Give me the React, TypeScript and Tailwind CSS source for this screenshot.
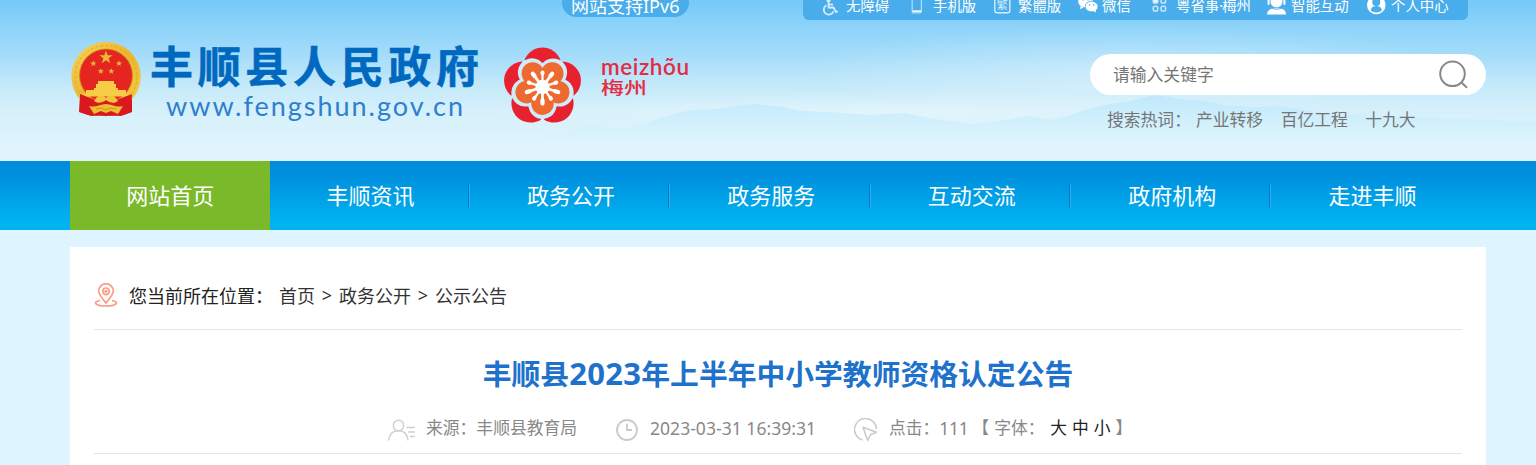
import type { ReactNode } from "react";

interface ToolLink {
  label: ReactNode;
  id: string;
  width: string;
  icon: ReactNode;
}

const toolLinks: ToolLink[] = [
  {
    id: "accessible",
    label: "无障碍",
    width: "w-[87px]",
    icon: (
      <g fill="none" stroke="#d5edfb" strokeWidth="1.8">
        <circle cx="6.5" cy="1.2" r="1.2" fill="#d5edfb" />
        <path d="M6.5 2.5v6h5l2.5 4.500 1.800-.8" />
        <path d="M7 5.500h4" />
        <path d="M4.4 6.200a5 5 0 1 0 7.100 6" />
      </g>
    ),
  },
  {
    id: "mobile",
    label: "手机版",
    width: "w-[85px]",
    icon: (
      <g transform="translate(2.5 -1)">
        <rect x=".7" y="0" width="9.2" height="14.8" rx="1.3" fill="none" stroke="#a9dbf8" strokeWidth="1.3" />
        <path d="M1 13.2h8.8" stroke="#eef9ff" strokeWidth="1.8" />
      </g>
    ),
  },
  {
    id: "traditional",
    label: "繁體版",
    width: "w-[84px]",
    icon: (
      <g transform="translate(0 -1)">
        <rect x=".8" y="-1" width="15" height="15.8" rx="2" fill="none" stroke="#d5edfb" strokeWidth="1.4" />
        <text x="2.8" y="11" fontSize="11" fill="#d5edfb">
          繁
        </text>
      </g>
    ),
  },
  {
    id: "wechat",
    label: "微信",
    width: "w-[74px]",
    icon: (
      <g fill="#fff" transform="translate(0 -2)">
        <ellipse cx="7.5" cy="4.5" rx="7.3" ry="6" />
        <path d="M2.5 9l-.3 3.2 3.5-2z" />
        <ellipse cx="13.6" cy="9.5" rx="6.4" ry="5.3" stroke="#48adea" strokeWidth=".8" />
        <path d="M15 13.8l3 1.6-.4-3z" />
        <g fill="#48adea">
          <circle cx="5" cy="2.7" r=".9" />
          <circle cx="10" cy="2.7" r=".9" />
          <circle cx="11.5" cy="8" r=".8" />
          <circle cx="15.7" cy="8" r=".8" />
        </g>
      </g>
    ),
  },
  {
    id: "yss",
    label: (
      <>
        粤省事<span className="inline-block w-[3px] [font-family:'Noto_Sans',sans-serif]">·</span>梅州
      </>
    ),
    width: "w-[115px]",
    icon: (
      <g fill="none" stroke="#c5e6fa" strokeWidth="1.5">
        <rect x="1.2" y="-1" width="4.6" height="5" rx="1" fill="#eef9ff" />
        <rect x="9" y="-1" width="4.6" height="5" rx="1.8" />
        <rect x="1.2" y="7.2" width="4.6" height="4.8" rx="1.8" />
        <rect x="9" y="7.2" width="4.6" height="4.8" rx="1.8" />
      </g>
    ),
  },
  {
    id: "assistant",
    label: "智能互动",
    width: "w-[100px]",
    icon: (
      <g fill="#fff" transform="translate(0 -.5)">
        <circle cx="9.5" cy="3" r="6" />
        <path d="M0 16c.2-4.7 3.2-6.2 9.5-6.2S18.800 11.300 19 16z" />
        <rect x=".6" y="1" width="2" height="5.500" rx="1" />
        <rect x="16.400" y="1" width="2" height="5.500" rx="1" />
        <path d="M4 8.800c3 2.600 8 2.600 11 0" stroke="#48adea" strokeWidth=".9" fill="none" />
      </g>
    ),
  },
  {
    id: "profile",
    label: "个人中心",
    width: "w-[100px]",
    icon: (
      <g>
        <circle cx="9.3" cy="6" r="9.300" fill="#fff" />
        <circle cx="9.3" cy="3" r="4" fill="#48adea" />
        <path d="M3.700 11.500c.4-3.300 2.400-4.600 5.600-4.600s5.200 1.300 5.600 4.600c-3 2.600-8.200 2.600-11.200 0z" fill="#48adea" />
      </g>
    ),
  },
];

const navItems = ["网站首页", "丰顺资讯", "政务公开", "政务服务", "互动交流", "政府机构", "走进丰顺"];

const hotWords = ["产业转移", "百亿工程", "十九大"];

const petals = [0, 72, 144, 216, 288];

const starPoints = "0,-1 .235,-.324 .951,-.309 .380,.124 .588,.809 0,.400 -.588,.809 -.380,.124 -.951,-.309 -.235,-.324";

const smallStars = [
  [23.3, 23.500],
  [49, 23.500],
  [30.8, 31.300],
  [41.3, 31.300],
];

function Scenery() {
  return (
    <svg className="absolute inset-0 h-[161px] w-full" viewBox="0 0 1536 161" preserveAspectRatio="none">
      <defs>
        <linearGradient id="hill" gradientUnits="userSpaceOnUse" x1="0" y1="95" x2="0" y2="150">
          <stop offset="0" stopColor="#b9e6fb" />
          <stop offset=".5" stopColor="#cdeffc" />
          <stop offset="1" stopColor="#def4fe" stopOpacity="0" />
        </linearGradient>
        <radialGradient id="glow">
          <stop offset="0" stopColor="#fff" stopOpacity=".3" />
          <stop offset="1" stopColor="#fff" stopOpacity="0" />
        </radialGradient>
      </defs>
      <ellipse cx="1130" cy="70" rx="330" ry="45" fill="url(#glow)" />
      <ellipse cx="900" cy="112" rx="420" ry="22" fill="url(#glow)" />
      <path
        d="M540 138L590 124L612 129L640 126L660 118L690 110L715 109L735 106L755 104L785 107L800 111L830 112L870 115L905 113L930 118L970 124L1000 121L1028 116L1050 120L1070 115L1085 110L1105 105L1130 101L1156 95L1180 99L1205 101L1225 105L1255 107L1275 106L1300 109L1325 113L1370 116L1410 118L1470 119L1536 122V161H540z"
        fill="url(#hill)"
        opacity=".75"
      />
    </svg>
  );
}

function Emblem() {
  return (
    <svg width="72" height="78" viewBox="0 0 72 78">
      <defs>
        <linearGradient id="gold" x1="0" y1="0" x2="1" y2="1">
          <stop offset="0" stopColor="#f7d65a" />
          <stop offset=".5" stopColor="#e9b62f" />
          <stop offset="1" stopColor="#f5cf45" />
        </linearGradient>
      </defs>
      <path d="M10 54L9 72l9 3 18 1 18-1 8-3V54z" fill="#d4151b" />
      <circle cx="36" cy="36.500" r="34.700" fill="url(#gold)" />
      <circle cx="36" cy="36.500" r="31" fill="none" stroke="#e0a92c" strokeWidth="1" strokeDasharray="3 2" />
      <circle cx="36" cy="35.500" r="26.500" fill="#e5251f" stroke="#c9901c" strokeWidth=".8" />
      <g fill="#e9b93a">
        <polygon points={starPoints} transform="translate(36 17.500) scale(7)" />
        {smallStars.map(([x, y]) => (
          <polygon key={`${x}-${y}`} points={starPoints} transform={`translate(${x} ${y}) scale(3.300)`} />
        ))}
      </g>
      <path d="M28 41h16v3h2v4H26v-4h2zM24 48h24v3H24zM16 50h40v4H16zM14 54h44v2.500H14z" fill="#f7cd48" />
      <path d="M10 54l18 7 8-3 8 3 18-7-1 18-10 4-15-1-15 1-11-4z" fill="#d9191e" />
      <path d="M27 57c3-2 6-2 9 1 3-3 6-3 9-1l3 4c-4 3-8 2-12-1-4 3-8 4-12 1z" fill="#f2c53d" />
      <path d="M19 66c7 2 11-2 17-2s10 4 17 2l-5 8-7-3-5 2-5-2-7 3z" fill="#edbd35" />
      <path d="M26 69l5-1 5 2 5-2 5 1" fill="none" stroke="#c98a18" strokeWidth=".8" />
    </svg>
  );
}

function SiteName() {
  return (
    <svg
      width="340"
      height="90"
      viewBox="0 0 340 90"
      className="[font-family:'Noto_Sans_CJK_SC',sans-serif]"
    >
      <text
        x="4"
        y="46.5"
        fontSize="43"
        fontWeight="700"
        fill="#0068bf"
        stroke="#0068bf"
        strokeWidth=".6"
        textLength="329"
      >
        丰顺县人民政府
      </text>
      <text
        x="20"
        y="79.500"
        fontSize="27"
        fill="#2e7fce"
        textLength="297"
        className="[font-family:Lato,sans-serif]"
      >
        www.fengshun.gov.cn
      </text>
    </svg>
  );
}

function MeizhouLogo() {
  return (
    <svg
      width="190"
      height="80"
      viewBox="0 0 190 80"
      className="[font-family:'Noto_Sans_CJK_SC',sans-serif]"
    >
      <g transform="translate(39.500 40)">
        {petals.map((angle) => (
          <path
            key={angle}
            d="M-18-27C-15-35-7-39.500 0-39.500S15-35 18-27L8-24H-8z"
            transform={`rotate(${angle})`}
            fill="#e82131"
          />
        ))}
        {petals.map((angle) => (
          <circle key={angle} cx="10.600" cy="-14.600" r="14" fill="#cdedfb" transform={`rotate(${angle})`} />
        ))}
        {petals.map((angle) => (
          <circle key={angle} cx="9.800" cy="-13.500" r="11.200" fill="#ef6a30" transform={`rotate(${angle})`} />
        ))}
        <circle r="14" fill="#ef6a30" />
        {petals.map((angle) => (
          <g key={angle} transform={`rotate(${angle})`} stroke="#fff" strokeLinecap="round">
            <path d="M0 0v-15" strokeWidth="2.200" />
            <path d="M0-13.500v-1" strokeWidth="4" />
            <path d="M0 0v17" strokeWidth="2.800" />
            <path d="M0 13.500v3" strokeWidth="4.200" />
          </g>
        ))}
        <circle r="7.200" fill="#fff" />
      </g>
      <text
        x="98"
        y="27.500"
        fontSize="22.500"
        fontWeight="600"
        fill="#e42b43"
        textLength="88"
        className="[font-family:Lato,sans-serif]"
      >
        meizhõu
      </text>
      <text x="98" y="46.500" fontSize="17" fontWeight="500" fill="#e42b43" textLength="46" lengthAdjust="spacingAndGlyphs">
        梅州
      </text>
    </svg>
  );
}

function Header() {
  return (
    <header className="relative h-[161px] bg-[linear-gradient(180deg,#76c9f9_0px,#8ed4fa_28px,#a4dcfa_55px,#c4e9fa_85px,#d5f0fb_110px,#dff4fd_140px,#e1f4fe_161px)]">
      <Scenery />
      <div className="relative mx-auto flex h-5 w-[1396px] items-start">
        <div className="-mt-[12px] ml-[492px] h-[29px] w-[127px] shrink-0 rounded-full bg-[#48adea] pl-[9px] text-[18px] leading-[35px] whitespace-nowrap text-white">
          网站支持<span className="[font-family:'Noto_Sans',sans-serif]">IPv6</span>
        </div>
        <div className="-mt-[10px] ml-[114px] flex h-[30px] w-[665px] shrink-0 rounded-b-md bg-[#48adea] pl-[19px]">
          {toolLinks.map((item) => (
            <a key={item.id} href="#" className={`flex shrink-0 ${item.width}`}>
              <svg width="20" height="18" className="mt-[9px] mr-1 shrink-0 overflow-visible">
                {item.icon}
              </svg>
              <span className="text-[14.4px] leading-[29px] whitespace-nowrap text-white">{item.label}</span>
            </a>
          ))}
        </div>
      </div>

      <div className="relative mx-auto flex w-[1396px]">
        <div className="mt-5">
          <Emblem />
        </div>
        <div className="mt-4 ml-1">
          <SiteName />
        </div>
        <div className="mt-[27px] ml-[17px]">
          <MeizhouLogo />
        </div>
        <div className="mt-[34px] ml-[397px] w-[396px] shrink-0">
          <form className="flex h-[41px] w-[396px] items-center rounded-full bg-white pr-[17px] pl-[23px]">
            <input
              type="text"
              placeholder="请输入关键字"
              className="min-w-0 flex-1 text-[16.8px] outline-none placeholder:text-[#757575]"
            />
            <button type="button" aria-label="搜索">
              <svg width="30" height="30" viewBox="0 0 30 30" fill="none" stroke="#888" strokeWidth="2">
                <circle cx="13.500" cy="13.800" r="12.300" />
                <path d="M22 22l6 5.800" />
              </svg>
            </button>
          </form>
          <div className="mt-[11px] ml-[17px] flex text-[16.8px] leading-[26px] whitespace-nowrap text-[#757575]">
            <span className="w-[89px]">搜索热词：</span>
            {hotWords.map((word) => (
              <a key={word} href="#" className="mr-[17.5px]">
                {word}
              </a>
            ))}
          </div>
        </div>
      </div>
    </header>
  );
}

function NavBar() {
  return (
    <nav className="h-[69px] bg-[linear-gradient(180deg,#008bdb_0%,#008fde_20%,#00b4f0_90%)]">
      <ul className="mx-auto flex w-[1396px]">
        {navItems.map((item, index) => (
          <li
            key={item}
            className={`flex h-[69px] w-[200.4px] shrink-0 items-center justify-between ${
              index === 0 ? "bg-[#7ab929]" : ""
            }`}
          >
            <a href="#" className="flex-1 pb-[2px] text-center text-[22px] text-white">
              {item}
            </a>
            {index > 0 && index < navItems.length - 1 && (
              <span className="mr-px -ml-[3px] h-6 w-[2px] border-l border-[#0079c5] bg-[#25b0ef]" />
            )}
          </li>
        ))}
      </ul>
    </nav>
  );
}

function Breadcrumb() {
  return (
    <div className="flex h-[83px] items-center border-b border-[#e5e5e5] pt-[14px] text-[18px] whitespace-nowrap text-[#333]">
      <svg width="24" height="24" viewBox="0 0 24 24" fill="none" stroke="#fa9b86" strokeWidth="1.700">
        <path d="M12 20C7.500 14.500 4.700 11.500 4.700 8a7.300 7.300 0 0 1 14.600 0c0 3.500-2.800 6.500-7.300 12z" />
        <circle cx="12" cy="8.300" r="3.300" />
        <circle cx="12" cy="8.300" r=".8" />
        <path d="M6 17.500c-8 1.500-4.500 5.500 6 5.500s14-4 6-5.500" />
      </svg>
      <span className="ml-[11px] w-[150px] text-[#222]">您当前所在位置：</span>
      <a href="#">首页</a>
      <span className="w-6 pt-px text-center text-[18px] [font-family:'Noto_Sans',sans-serif]">&gt;</span>
      <a href="#">政务公开</a>
      <span className="w-6 pt-px text-center text-[18px] [font-family:'Noto_Sans',sans-serif]">&gt;</span>
      <a href="#">公示公告</a>
    </div>
  );
}

function ArticleMeta() {
  return (
    <div className="flex h-[51px] items-center border-b border-[#e5e5e5] pl-[294px] text-[16.8px] whitespace-nowrap text-[#888]">
      <svg width="28" height="22" viewBox="0 0 28 22" fill="none" stroke="#d0d0d0" strokeWidth="1.500" className="mt-[3px]">
        <circle cx="10.500" cy="6.500" r="5.200" />
        <path d="M.8 21.500c.4-6 4-9.700 9.700-9.700s9 3.500 9.500 9.700M18.500 8.500H27M20 13h7M22 17.500h5" />
      </svg>
      <span className="ml-[10px] w-[190px]">来源：丰顺县教育局</span>
      <svg width="22" height="22" viewBox="0 0 22 22" fill="none" stroke="#cacaca" strokeWidth="1.800" className="mt-[3px]">
        <circle cx="11" cy="11" r="10" />
        <path d="M11 4.800V11h5" />
      </svg>
      <span className="ml-3 w-[204px] text-[17.500px] tracking-[0.04px] [font-family:'Noto_Sans',sans-serif]">
        2023-03-31 16:39:31
      </span>
      <svg width="24" height="24" viewBox="0 0 24 24" fill="none" stroke="#cacaca" strokeWidth="1.500" className="mt-[3px]">
        <path d="M8.500 22A11 11 0 1 1 22.500 11" />
        <path d="M9 9.300l13.500 5-5.800 2.200-3 6z" strokeLinejoin="round" />
      </svg>
      <span className="ml-[11px]">点击：</span>
      <span className="w-[31px] text-[17.500px] tracking-[-0.3px] [font-family:'Noto_Sans',sans-serif]">111</span>
      <span className="ml-[2px]">【</span>
      <span className="ml-[5px] w-[56px]">字体：</span>
      <div className="flex gap-[5px] text-[#222]">
        <a href="#">大</a>
        <a href="#">中</a>
        <a href="#">小</a>
      </div>
      <span className="ml-[5px]">】</span>
    </div>
  );
}

export default function App() {
  return (
    <div className="h-[465px] overflow-hidden bg-[#def4fe] [font-family:'Noto_Sans_CJK_SC',sans-serif]">
      <Header />
      <NavBar />
      <main className="mr-[50px] ml-[70px] mt-[17px] h-[218px] bg-white px-6">
        <Breadcrumb />
        <h1 className="flex h-[73px] items-center justify-center pt-[13px] text-[28.8px] font-bold whitespace-nowrap text-[#1e72cc]">
          丰顺县
          <span className="text-[31px] tracking-[0.3px] [font-family:'Noto_Sans',sans-serif]">2023</span>
          年上半年中小学教师资格认定公告
        </h1>
        <ArticleMeta />
      </main>
    </div>
  );
}
